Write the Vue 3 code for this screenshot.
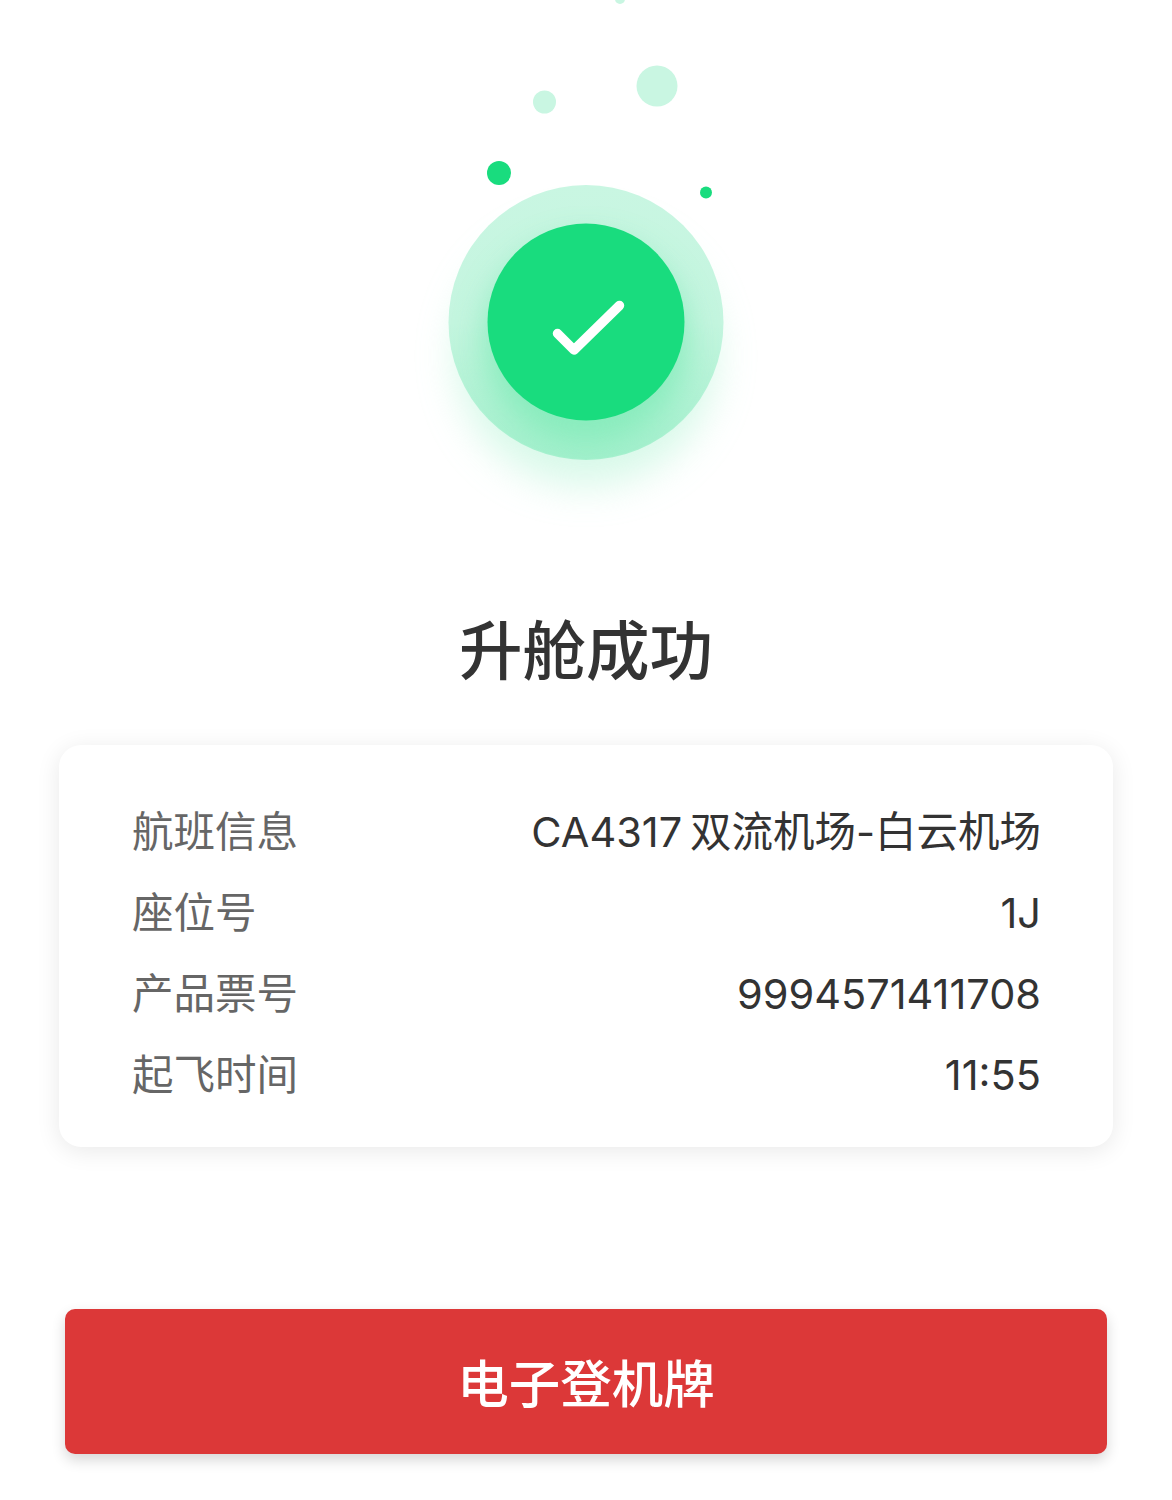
<template>
  <div class="page">
    <div class="hero">
      <svg class="hero-art" width="400" height="530" viewBox="386 0 400 530">
        <defs>
          <linearGradient id="ring" x1="0" y1="0" x2="0" y2="1">
            <stop offset="0" stop-color="#c9f6e2" />
            <stop offset="0.5" stop-color="#c4f5df" />
            <stop offset="1" stop-color="#a4f0cd" />
          </linearGradient>
          <filter id="glow" x="-40%" y="-40%" width="180%" height="180%">
            <feGaussianBlur stdDeviation="19" />
          </filter>
          <filter id="inner-glow" x="-40%" y="-40%" width="180%" height="180%">
            <feGaussianBlur stdDeviation="16" />
          </filter>
          <clipPath id="ring-clip">
            <circle cx="586" cy="322" r="137" />
          </clipPath>
        </defs>
        <circle cx="620" cy="-1" r="5" fill="#c9f6e2" />
        <circle cx="544.500" cy="102" r="11.500" fill="#c9f6e2" />
        <circle cx="657" cy="86" r="20.500" fill="#c9f6e2" />
        <circle cx="499" cy="173" r="12" fill="#19dc7e" />
        <circle cx="706" cy="192.500" r="6" fill="#19dc7e" />
        <circle cx="586" cy="356" r="130" fill="#bdf5da" opacity="0.6" filter="url(#glow)" />
        <circle cx="586" cy="322.500" r="137.500" fill="url(#ring)" />
        <g clip-path="url(#ring-clip)">
          <circle cx="586" cy="342" r="102" fill="#7beab5" opacity="0.75" filter="url(#inner-glow)" />
        </g>
        <circle cx="586" cy="322" r="98.500" fill="#19dc7e" />
        <path d="M557.500 333.500 L574 350 L619.500 305.500" fill="none" stroke="#fff" stroke-width="9.500" stroke-linecap="round" stroke-linejoin="round" />
      </svg>
    </div>

    <h1 class="title">升舱成功</h1>

    <div class="card">
      <div v-for="row in rows" :key="row.label" class="row">
        <span class="label">{{ row.label }}</span>
        <span class="value">{{ row.value }}</span>
      </div>
    </div>

    <button class="action">电子登机牌</button>
  </div>
</template>

<script setup>
const rows = [
  { label: '航班信息', value: 'CA4317 双流机场-白云机场' },
  { label: '座位号', value: '1J' },
  { label: '产品票号', value: '9994571411708' },
  { label: '起飞时间', value: '11:55' }
];
</script>

<style>
html,
body {
  background: #fff;
}
</style>

<style scoped>
.page {
  width: 1172px;
  height: 1500px;
  overflow: hidden;
  display: flex;
  flex-direction: column;
  align-items: center;
  background: #fff;
  font-family: Inter, "Noto Sans CJK SC", sans-serif;
}

.hero {
  height: 530px;
  flex-shrink: 0;
}

.hero-art {
  display: block;
  overflow: visible;
}

.title {
  margin: 78px 0 0;
  height: 88px;
  line-height: 86px;
  font-size: 63.500px;
  font-weight: 500;
  color: #333;
}

.card {
  box-sizing: border-box;
  width: 1054px;
  height: 402px;
  margin-top: 49px;
  padding: 47px 72px 0 73px;
  display: flex;
  flex-direction: column;
  background: #fff;
  border-radius: 22px;
  box-shadow: 0 4px 24px rgba(0, 0, 0, 0.09);
}

.row {
  height: 81px;
  line-height: 81px;
  display: flex;
  align-items: baseline;
  justify-content: space-between;
  font-size: 41.500px;
  flex-shrink: 0;
}

.label {
  color: #666;
}

.value {
  color: #333;
  word-spacing: -4px;
}

.action {
  width: 1042px;
  height: 145px;
  margin-top: 162px;
  padding: 0 0 3px;
  flex-shrink: 0;
  border: none;
  border-radius: 10px;
  background: #dc3838;
  color: #fff;
  font-family: inherit;
  font-size: 51.500px;
  font-weight: 500;
  box-shadow: 0 6px 14px rgba(0, 0, 0, 0.16);
}
</style>
